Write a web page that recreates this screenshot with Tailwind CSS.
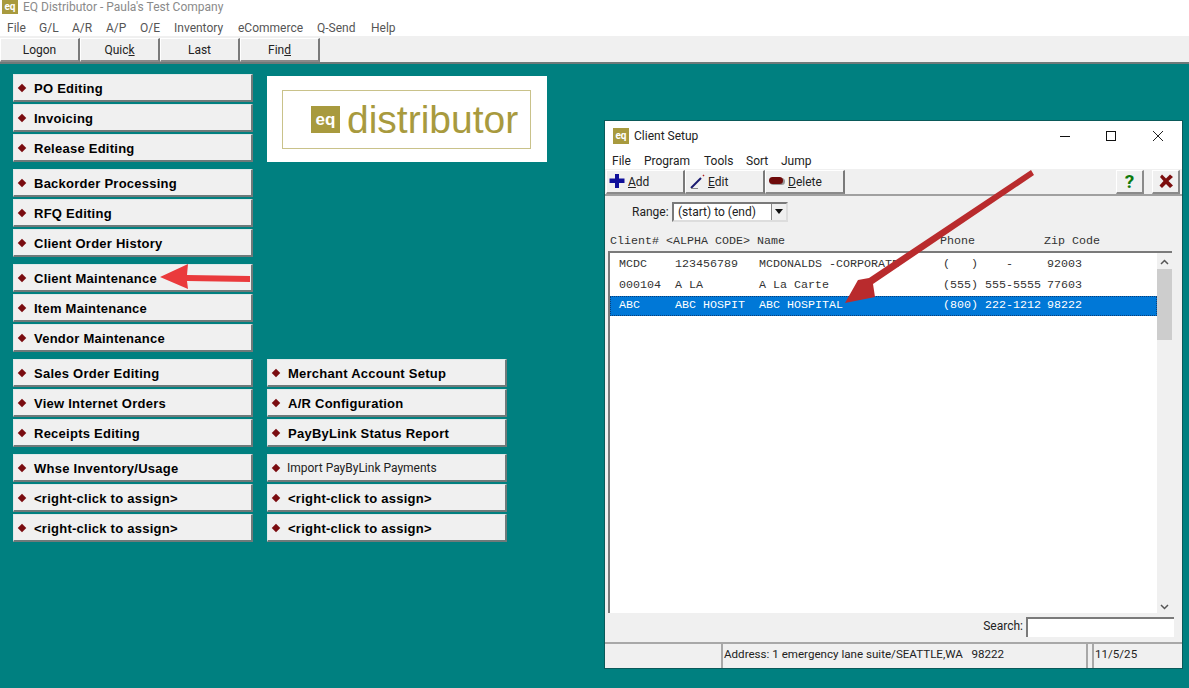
<!DOCTYPE html>
<html lang="en">
  <head>
    <meta charset="UTF-8" />
    <script src="https://cdn.jsdelivr.net/npm/@tailwindcss/browser@4"></script>
    <title>EQ Distributor</title>
  </head>
  <body class="relative h-[688px] w-[1189px] overflow-hidden bg-[#008080] font-['Roboto',sans-serif]">
    <!-- main window chrome -->
    <header class="bg-white">
      <div class="flex h-[14px] items-start">
        <div class="ml-[2px] flex h-[14px] w-[16px] items-center justify-center bg-[#a89a3e] text-[10px] leading-none font-bold text-white">eq</div>
        <span class="ml-[5px] text-[12px] leading-[14px] text-[#8a8a8a]">EQ Distributor - Paula's Test Company</span>
      </div>
      <nav class="flex h-[22px] items-center pl-[7px] pt-[6px] text-[12px] leading-none text-[#555]">
        <span class="w-[32px]">File</span>
        <span class="w-[33px]">G/L</span>
        <span class="w-[34px]">A/R</span>
        <span class="w-[34px]">A/P</span>
        <span class="w-[34px]">O/E</span>
        <span class="w-[64px]">Inventory</span>
        <span class="w-[79px]">eCommerce</span>
        <span class="w-[54px]">Q-Send</span>
        <span>Help</span>
      </nav>
      <div class="flex h-[28px] border-b-2 border-[#6f7a7a] bg-[#f0f0f0] pt-[2px] text-[12px] text-[#222]">
        <div class="flex h-[24px] w-[80px] items-center justify-center border-t border-l border-white border-r-2 border-r-[#7a7a7a] border-b-2 border-b-[#8a8a8a] pt-[1px]">Logon</div>
        <div class="flex h-[24px] w-[80px] items-center justify-center border-t border-l border-white border-r-2 border-r-[#7a7a7a] border-b-2 border-b-[#8a8a8a] pt-[1px]"><span>Quic<u>k</u></span></div>
        <div class="flex h-[24px] w-[80px] items-center justify-center border-t border-l border-white border-r-2 border-r-[#7a7a7a] border-b-2 border-b-[#8a8a8a] pt-[1px]">Last</div>
        <div class="flex h-[24px] w-[80px] items-center justify-center border-t border-l border-white border-r-2 border-r-[#7a7a7a] border-b-2 border-b-[#8a8a8a] pt-[1px]"><span>Fin<u>d</u></span></div>
      </div>
    </header>

    <main class="flex gap-[14px] pl-[13px] pt-[10px] font-['Liberation_Sans',sans-serif] text-[13px] font-bold tracking-[0.25px] text-black">
      <!-- left column of shortcut buttons -->
      <div class="flex w-[240px] flex-col gap-[7px]">
        <div class="flex flex-col gap-[2px]">
          <div class="flex h-[28px] items-center border-t border-l border-[#dfe9e9] border-r-2 border-r-[#6f7a7a] border-b-2 border-b-[#6f7a7a] bg-[#f0f0f0] pl-[5px] pt-[2px]"><i class="mr-[9px] -mt-[2px] h-[6px] w-[6px] rotate-45 bg-[#7a0c10]"></i>PO Editing</div>
          <div class="flex h-[28px] items-center border-t border-l border-[#dfe9e9] border-r-2 border-r-[#6f7a7a] border-b-2 border-b-[#6f7a7a] bg-[#f0f0f0] pl-[5px] pt-[2px]"><i class="mr-[9px] -mt-[2px] h-[6px] w-[6px] rotate-45 bg-[#7a0c10]"></i>Invoicing</div>
          <div class="flex h-[28px] items-center border-t border-l border-[#dfe9e9] border-r-2 border-r-[#6f7a7a] border-b-2 border-b-[#6f7a7a] bg-[#f0f0f0] pl-[5px] pt-[2px]"><i class="mr-[9px] -mt-[2px] h-[6px] w-[6px] rotate-45 bg-[#7a0c10]"></i>Release Editing</div>
        </div>
        <div class="flex flex-col gap-[2px]">
          <div class="flex h-[28px] items-center border-t border-l border-[#dfe9e9] border-r-2 border-r-[#6f7a7a] border-b-2 border-b-[#6f7a7a] bg-[#f0f0f0] pl-[5px] pt-[2px]"><i class="mr-[9px] -mt-[2px] h-[6px] w-[6px] rotate-45 bg-[#7a0c10]"></i>Backorder Processing</div>
          <div class="flex h-[28px] items-center border-t border-l border-[#dfe9e9] border-r-2 border-r-[#6f7a7a] border-b-2 border-b-[#6f7a7a] bg-[#f0f0f0] pl-[5px] pt-[2px]"><i class="mr-[9px] -mt-[2px] h-[6px] w-[6px] rotate-45 bg-[#7a0c10]"></i>RFQ Editing</div>
          <div class="flex h-[28px] items-center border-t border-l border-[#dfe9e9] border-r-2 border-r-[#6f7a7a] border-b-2 border-b-[#6f7a7a] bg-[#f0f0f0] pl-[5px] pt-[2px]"><i class="mr-[9px] -mt-[2px] h-[6px] w-[6px] rotate-45 bg-[#7a0c10]"></i>Client Order History</div>
        </div>
        <div class="flex flex-col gap-[2px]">
          <div class="flex h-[28px] items-center border-t border-l border-[#dfe9e9] border-r-2 border-r-[#6f7a7a] border-b-2 border-b-[#6f7a7a] bg-[#f0f0f0] pl-[5px] pt-[2px]"><i class="mr-[9px] -mt-[2px] h-[6px] w-[6px] rotate-45 bg-[#7a0c10]"></i>Client Maintenance</div>
          <div class="flex h-[28px] items-center border-t border-l border-[#dfe9e9] border-r-2 border-r-[#6f7a7a] border-b-2 border-b-[#6f7a7a] bg-[#f0f0f0] pl-[5px] pt-[2px]"><i class="mr-[9px] -mt-[2px] h-[6px] w-[6px] rotate-45 bg-[#7a0c10]"></i>Item Maintenance</div>
          <div class="flex h-[28px] items-center border-t border-l border-[#dfe9e9] border-r-2 border-r-[#6f7a7a] border-b-2 border-b-[#6f7a7a] bg-[#f0f0f0] pl-[5px] pt-[2px]"><i class="mr-[9px] -mt-[2px] h-[6px] w-[6px] rotate-45 bg-[#7a0c10]"></i>Vendor Maintenance</div>
        </div>
        <div class="flex flex-col gap-[2px]">
          <div class="flex h-[28px] items-center border-t border-l border-[#dfe9e9] border-r-2 border-r-[#6f7a7a] border-b-2 border-b-[#6f7a7a] bg-[#f0f0f0] pl-[5px] pt-[2px]"><i class="mr-[9px] -mt-[2px] h-[6px] w-[6px] rotate-45 bg-[#7a0c10]"></i>Sales Order Editing</div>
          <div class="flex h-[28px] items-center border-t border-l border-[#dfe9e9] border-r-2 border-r-[#6f7a7a] border-b-2 border-b-[#6f7a7a] bg-[#f0f0f0] pl-[5px] pt-[2px]"><i class="mr-[9px] -mt-[2px] h-[6px] w-[6px] rotate-45 bg-[#7a0c10]"></i>View Internet Orders</div>
          <div class="flex h-[28px] items-center border-t border-l border-[#dfe9e9] border-r-2 border-r-[#6f7a7a] border-b-2 border-b-[#6f7a7a] bg-[#f0f0f0] pl-[5px] pt-[2px]"><i class="mr-[9px] -mt-[2px] h-[6px] w-[6px] rotate-45 bg-[#7a0c10]"></i>Receipts Editing</div>
        </div>
        <div class="flex flex-col gap-[2px]">
          <div class="flex h-[28px] items-center border-t border-l border-[#dfe9e9] border-r-2 border-r-[#6f7a7a] border-b-2 border-b-[#6f7a7a] bg-[#f0f0f0] pl-[5px] pt-[2px]"><i class="mr-[9px] -mt-[2px] h-[6px] w-[6px] rotate-45 bg-[#7a0c10]"></i>Whse Inventory/Usage</div>
          <div class="flex h-[28px] items-center border-t border-l border-[#dfe9e9] border-r-2 border-r-[#6f7a7a] border-b-2 border-b-[#6f7a7a] bg-[#f0f0f0] pl-[5px] pt-[2px]"><i class="mr-[9px] -mt-[2px] h-[6px] w-[6px] rotate-45 bg-[#7a0c10]"></i>&lt;right-click to assign&gt;</div>
          <div class="flex h-[28px] items-center border-t border-l border-[#dfe9e9] border-r-2 border-r-[#6f7a7a] border-b-2 border-b-[#6f7a7a] bg-[#f0f0f0] pl-[5px] pt-[2px]"><i class="mr-[9px] -mt-[2px] h-[6px] w-[6px] rotate-45 bg-[#7a0c10]"></i>&lt;right-click to assign&gt;</div>
        </div>
      </div>

      <!-- logo and second column -->
      <div class="flex flex-col">
        <div class="mt-[2px] h-[86px] w-[280px] bg-white pl-[15px] pt-[14px]">
          <div class="flex h-[59px] w-[249px] items-center border border-[#c9c28a] pl-[28px]">
            <div class="flex h-[27px] w-[29px] items-center justify-center bg-[#a89a3e] text-[17px] leading-none font-bold tracking-normal text-white">eq</div>
            <span class="ml-[7px] text-[39px] leading-none font-normal tracking-normal text-[#a89a3e]">distributor</span>
          </div>
        </div>
        <div class="mt-[197px] flex w-[240px] flex-col gap-[7px]">
          <div class="flex flex-col gap-[2px]">
            <div class="flex h-[28px] items-center border-t border-l border-[#dfe9e9] border-r-2 border-r-[#6f7a7a] border-b-2 border-b-[#6f7a7a] bg-[#f0f0f0] pl-[5px] pt-[2px]"><i class="mr-[9px] -mt-[2px] h-[6px] w-[6px] rotate-45 bg-[#7a0c10]"></i>Merchant Account Setup</div>
            <div class="flex h-[28px] items-center border-t border-l border-[#dfe9e9] border-r-2 border-r-[#6f7a7a] border-b-2 border-b-[#6f7a7a] bg-[#f0f0f0] pl-[5px] pt-[2px]"><i class="mr-[9px] -mt-[2px] h-[6px] w-[6px] rotate-45 bg-[#7a0c10]"></i>A/R Configuration</div>
            <div class="flex h-[28px] items-center border-t border-l border-[#dfe9e9] border-r-2 border-r-[#6f7a7a] border-b-2 border-b-[#6f7a7a] bg-[#f0f0f0] pl-[5px] pt-[2px]"><i class="mr-[9px] -mt-[2px] h-[6px] w-[6px] rotate-45 bg-[#7a0c10]"></i>PayByLink Status Report</div>
          </div>
          <div class="flex flex-col gap-[2px]">
            <div class="flex h-[28px] items-center border-t border-l border-[#dfe9e9] border-r-2 border-r-[#6f7a7a] border-b-2 border-b-[#6f7a7a] bg-[#f0f0f0] pl-[5px] pt-[1px] font-['Roboto',sans-serif] text-[12px] font-normal tracking-normal text-[#222]"><i class="mr-[8px] h-[6px] w-[6px] rotate-45 bg-[#7a0c10]"></i>Import PayByLink Payments</div>
            <div class="flex h-[28px] items-center border-t border-l border-[#dfe9e9] border-r-2 border-r-[#6f7a7a] border-b-2 border-b-[#6f7a7a] bg-[#f0f0f0] pl-[5px] pt-[2px]"><i class="mr-[9px] -mt-[2px] h-[6px] w-[6px] rotate-45 bg-[#7a0c10]"></i>&lt;right-click to assign&gt;</div>
            <div class="flex h-[28px] items-center border-t border-l border-[#dfe9e9] border-r-2 border-r-[#6f7a7a] border-b-2 border-b-[#6f7a7a] bg-[#f0f0f0] pl-[5px] pt-[2px]"><i class="mr-[9px] -mt-[2px] h-[6px] w-[6px] rotate-45 bg-[#7a0c10]"></i>&lt;right-click to assign&gt;</div>
          </div>
        </div>
      </div>
    </main>

    <!-- Client Setup child window -->
    <section class="absolute left-[605px] top-[121px] flex h-[547px] w-[577px] flex-col overflow-hidden bg-[#f0f0f0] text-[12px] text-[#222] shadow-[0_0_0_1px_#0a5a5a]">
      <div class="flex h-[28px] items-center bg-white pl-[8px] pt-[2px]">
        <div class="flex h-[16px] w-[16px] items-center justify-center bg-[#a89a3e] text-[10px] leading-none font-bold text-white">eq</div>
        <span class="ml-[5px] flex-1 text-[12px]">Client Setup</span>
        <svg class="mr-[34px]" width="12" height="12" viewBox="0 0 12 12"><path d="M1 6.5H11" stroke="#111" stroke-width="1"/></svg>
        <svg class="mr-[35px]" width="12" height="12" viewBox="0 0 12 12"><rect x="1.5" y="1.5" width="9" height="9" fill="none" stroke="#111"/></svg>
        <svg class="mr-[18px]" width="12" height="12" viewBox="0 0 12 12"><path d="M1 1L11 11M11 1L1 11" stroke="#222" stroke-width="1"/></svg>
      </div>
      <nav class="flex h-[20px] items-center bg-white pl-[7px] pt-[4px] text-[12px] leading-none">
        <span class="w-[32px]">File</span><span class="w-[60px]">Program</span><span class="w-[42px]">Tools</span><span class="w-[35px]">Sort</span><span>Jump</span>
      </nav>
      <div class="flex h-[27px] items-start border-b-2 border-[#a0a0a0] pt-[1px] pl-[1px]">
        <div class="flex h-[24px] w-[79px] items-center border-t border-l border-white border-r-2 border-r-[#7a7a7a] border-b-2 border-b-[#8a8a8a] pl-[2px]">
          <svg width="16" height="16" viewBox="0 0 16 16"><path d="M6 1H10V5.5H15.5V10H10V15H6V10H0.5V5.5H6Z" fill="#10109a"/></svg>
          <span class="ml-[3px] pt-[2px]"><u>A</u>dd</span>
        </div>
        <div class="flex h-[24px] w-[80px] items-center border-t border-l border-white border-r-2 border-r-[#7a7a7a] border-b-2 border-b-[#8a8a8a] pl-[3px]">
          <svg width="18" height="16" viewBox="0 0 18 16"><path d="M2 15L12 5" stroke="#1a1a70" stroke-width="2"/><path d="M2 15.5H9" stroke="#888" stroke-width="1"/><path d="M14 2L15 3" stroke="#b02020" stroke-width="1.5"/></svg>
          <span class="ml-[1px] pt-[2px]"><u>E</u>dit</span>
        </div>
        <div class="flex h-[24px] w-[80px] items-center border-t border-l border-white border-r-2 border-r-[#7a7a7a] border-b-2 border-b-[#8a8a8a] pl-[3px]">
          <svg width="16" height="10" viewBox="0 0 16 10"><rect x="1" y="2" width="15" height="7" rx="3.5" fill="#999"/><rect x="0" y="1" width="14" height="7" rx="3.5" fill="#6e0a0a"/></svg>
          <span class="ml-[3px] pt-[2px]"><u>D</u>elete</span>
        </div>
        <div class="ml-auto mr-[8px] flex h-[24px] w-[28px] items-center justify-center border-t border-l border-white border-r-2 border-r-[#8a8a8a] border-b-2 border-b-[#8a8a8a] text-[19px] leading-none font-bold text-[#0d7a0d]">?</div>
        <div class="mr-[2px] flex h-[24px] w-[28px] items-center justify-center border-t border-l border-white border-r-2 border-r-[#8a8a8a] border-b-2 border-b-[#8a8a8a]">
          <svg width="16" height="16" viewBox="0 0 16 16"><path d="M2 4L4 1.5L8 5.5L12 1.5L15 4L10.5 8L15 12.5L12 15L8 11L4 15L1.5 12.5L5.5 8Z" fill="#7c0e0e"/></svg>
        </div>
      </div>
      <div class="flex h-[29px] items-center pl-[27px] pt-[3px]">
        <span class="w-[40px]">Range:</span>
        <div class="flex h-[20px] w-[116px] items-center justify-between border-2 border-[#7a7a7a] border-r-[#ddd] border-b-[#ddd] bg-white pl-[4px] text-[12px]">
          <span>(start) to (end)</span>
          <span class="flex h-full w-[15px] items-center justify-center border-l border-[#888] bg-[#f0f0f0]">
            <svg width="8" height="5" viewBox="0 0 8 5"><path d="M0 0H8L4 5Z" fill="#111"/></svg>
          </span>
        </div>
      </div>
      <div class="flex h-[26px] items-center pl-[5px] pt-[8px] font-['Liberation_Mono',monospace] text-[11.67px] leading-none whitespace-pre text-[#333]">
        <span class="w-[56px]">Client#</span><span class="w-[91px]">&lt;ALPHA CODE&gt;</span><span class="w-[183px]">Name</span><span class="w-[104px]">Phone</span><span>Zip Code</span>
      </div>
      <!-- client list -->
      <div class="mx-[3px] flex h-[363px] w-[564px] border-t-2 border-l-2 border-[#7a7a7a] bg-white font-['Liberation_Mono',monospace] text-[11.67px] text-[#333]">
        <div class="flex-1">
          <div class="flex h-[21px] items-center whitespace-pre pt-[2px]"><span class="w-[65px] pl-[9px]">MCDC</span><span class="w-[84px]">123456789</span><span class="w-[184px]">MCDONALDS -CORPORATE</span><span class="w-[104px]">(   )    -</span><span>92003</span></div>
          <div class="flex h-[21px] items-center whitespace-pre pt-[2px]"><span class="w-[65px] pl-[9px]">000104</span><span class="w-[84px]">A LA</span><span class="w-[184px]">A La Carte</span><span class="w-[104px]">(555) 555-5555</span><span>77603</span></div>
          <div class="mt-[1px] flex h-[20px] items-center whitespace-pre border border-dotted border-[#0a3f7a] bg-[#0078d7] text-white"><span class="w-[64px] pl-[8px]">ABC</span><span class="w-[84px]">ABC HOSPIT</span><span class="w-[184px]">ABC HOSPITAL</span><span class="w-[104px]">(800) 222-1212</span><span>98222</span></div>
        </div>
        <div class="relative w-[15px] bg-[#f0f0f0]">
          <svg class="absolute left-[3px] top-[6px]" width="9" height="6" viewBox="0 0 9 6"><path d="M1 5L4.5 1.5L8 5" fill="none" stroke="#555" stroke-width="1.5"/></svg>
          <div class="absolute left-0 top-[16px] h-[71px] w-[15px] bg-[#cdcdcd]"></div>
          <svg class="absolute bottom-[3px] left-[3px]" width="9" height="6" viewBox="0 0 9 6"><path d="M1 1L4.5 4.5L8 1" fill="none" stroke="#555" stroke-width="1.5"/></svg>
        </div>
      </div>
      <div class="flex h-[27px] items-center justify-end pr-[8px]">
        <span class="-mt-[1px]">Search:</span>
        <div class="ml-[3px] h-[20px] w-[148px] border-t-2 border-l-2 border-[#7a7a7a] bg-white"></div>
      </div>
      <!-- status bar -->
      <div class="mt-[2px] flex h-[26px] border-t-2 border-[#a8a8a8] text-[11.6px]">
        <div class="w-[116px]"></div>
        <div class="flex w-[367px] items-start border-l-2 border-r-2 border-[#a8a8a8] pl-[1px] leading-[20px]">Address: 1 emergency lane suite/SEATTLE,WA&nbsp;&nbsp;&nbsp;98222</div>
        <div class="ml-[4px] flex-1 border-l-2 border-[#a8a8a8] pl-[1px] leading-[20px]">11/5/25</div>
      </div>
    </section>

    <!-- annotation arrows drawn on top of the screenshot -->
    <svg class="absolute left-0 top-0" width="1189" height="688" viewBox="0 0 1189 688">
      <path d="M160 277L188 264L187 275L250 276V282L187 281L188 289Z" fill="#ea3a3c"/>
      <path d="M1031 170L869 278L858 280L845 303L875 297L873 284L1034 175Z" fill="#b92b2d"/>
    </svg>
  </body>
</html>
